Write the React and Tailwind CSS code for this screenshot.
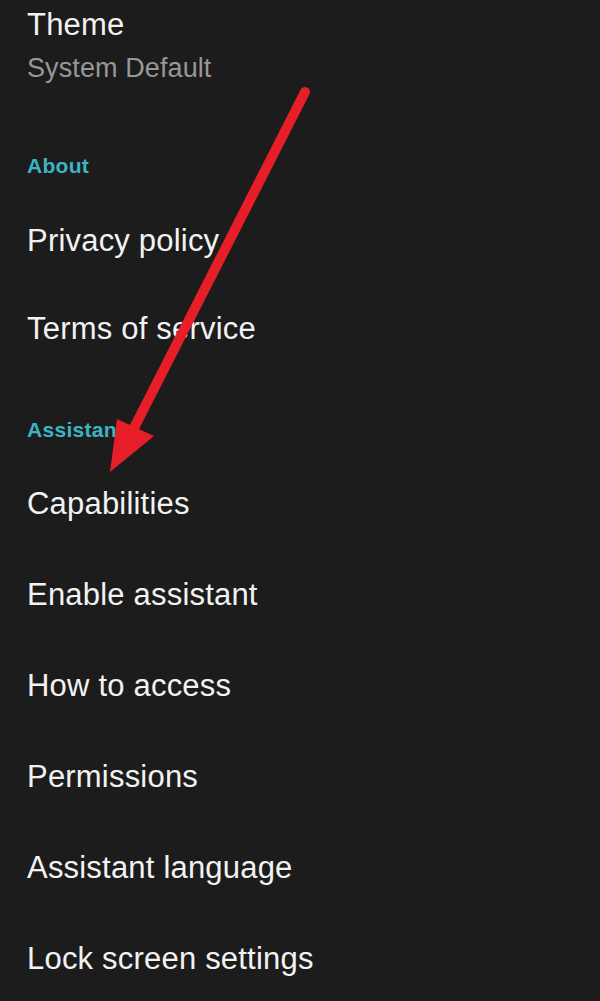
import React from "react";

const font = { fontFamily: '"Liberation Sans", Arial, sans-serif' };

function Item({ label, h }) {
  return (
    <div
      className="text-[31px] text-[#f2f2f2] tracking-[0.2px] whitespace-nowrap"
      style={{ height: h, lineHeight: `${h}px` }}
    >
      {label}
    </div>
  );
}

function Header({ label }) {
  return (
    <div className="text-[21px] font-bold leading-[28px] h-[28px] text-[#3cb4c3] tracking-[0.3px]">
      {label}
    </div>
  );
}

export default function App() {
  return (
    <div
      className="relative w-[600px] h-[1001px] overflow-hidden bg-[#1c1c1c]"
      style={font}
    >
      <div className="flex flex-col pl-[27px] pt-[5px]">
        <div className="text-[31px] leading-[40px] h-[40px] text-[#f2f2f2] tracking-[0.2px]">
          Theme
        </div>
        <div className="mt-[5px] text-[27px] leading-[36px] h-[36px] text-[#979797] tracking-[0.1px]">
          System Default
        </div>
        <div className="mt-[66px]">
          <Header label="About" />
        </div>
        <div className="mt-[17px] flex flex-col">
          <Item label="Privacy policy" h={88} />
          <Item label="Terms of service" h={88} />
        </div>
        <div className="mt-[43px]">
          <Header label="Assistant" />
        </div>
        <div className="mt-[14px] flex flex-col">
          <Item label="Capabilities" h={91} />
          <Item label="Enable assistant" h={91} />
          <Item label="How to access" h={91} />
          <Item label="Permissions" h={91} />
          <Item label="Assistant language" h={91} />
          <Item label="Lock screen settings" h={91} />
        </div>
      </div>
      <svg
        className="absolute inset-0 pointer-events-none"
        width="600"
        height="1001"
        viewBox="0 0 600 1001"
      >
        <line
          x1="305"
          y1="92"
          x2="134"
          y2="428"
          stroke="#e61e28"
          strokeWidth="10"
          strokeLinecap="round"
        />
        <polygon points="117,419 154,436 110,472" fill="#e61e28" />
      </svg>
    </div>
  );
}
